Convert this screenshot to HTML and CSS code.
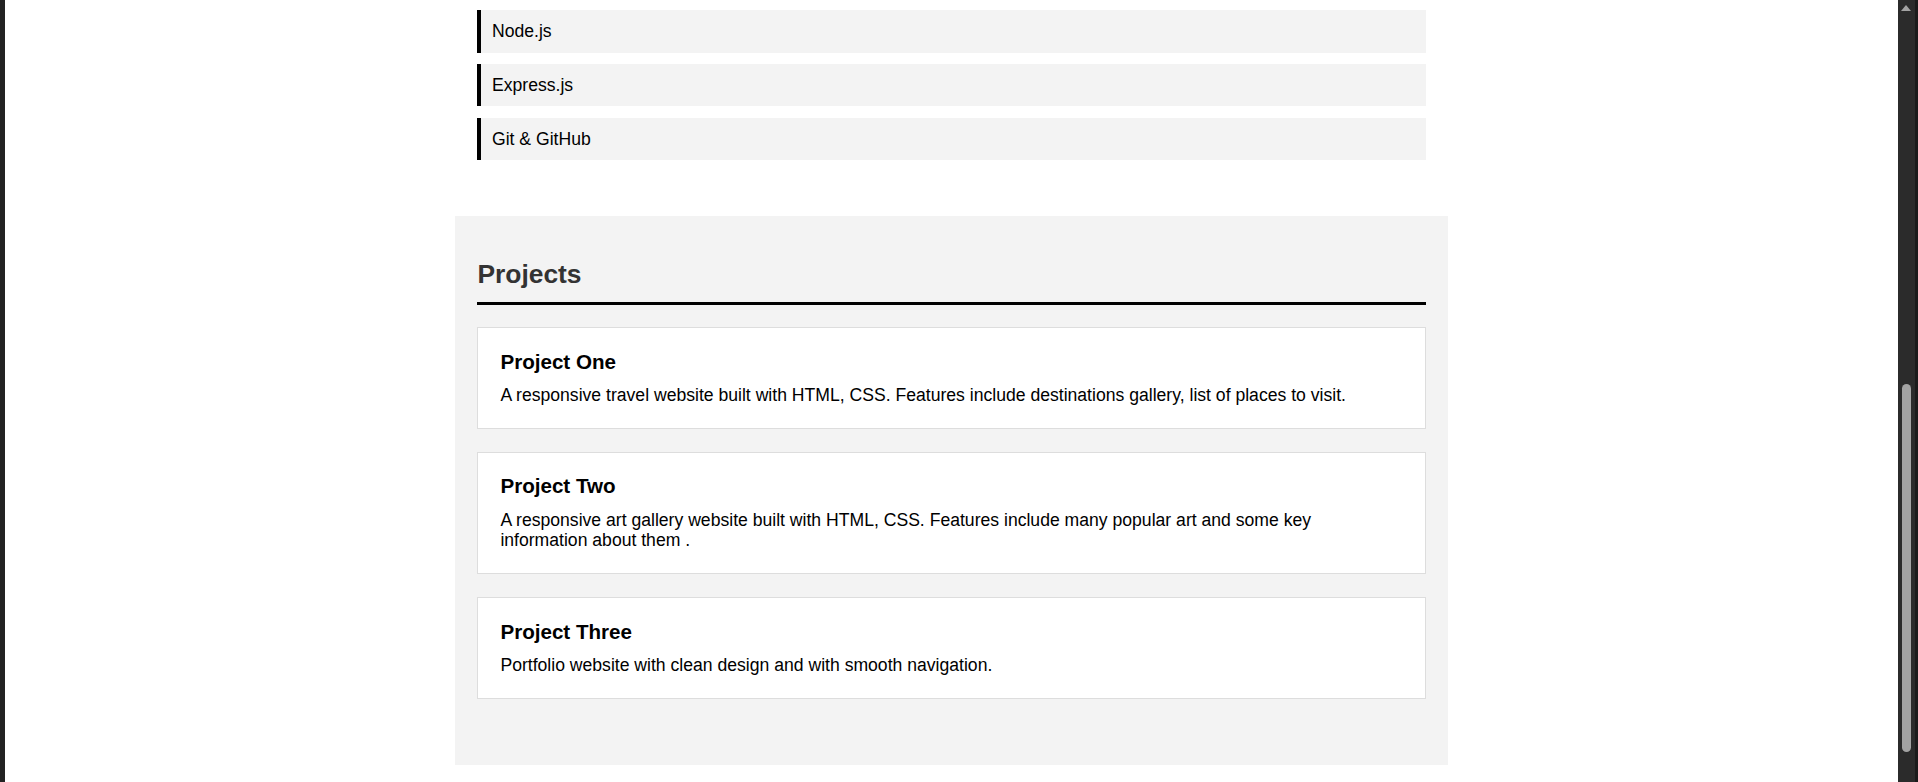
FILE: index.html
```html
<!DOCTYPE html>
<html lang="en">
<head>
<meta charset="utf-8">
<title>Portfolio</title>
<link rel="stylesheet" href="styles.css">
</head>
<body>
<div class="window">
  <div class="edge"></div>
  <div class="viewport">
    <main class="page">
      <section class="skills">
        <ul class="skill-list">
          <li class="skill">Node.js</li>
          <li class="skill">Express.js</li>
          <li class="skill">Git &amp; GitHub</li>
        </ul>
      </section>
      <section class="projects">
        <h2 class="section-title">Projects</h2>
        <div class="project-list">
          <article class="project">
            <h3 class="project-title">Project One</h3>
            <p class="project-desc">A responsive travel website built with HTML, CSS. Features include destinations gallery, list of places to visit.</p>
          </article>
          <article class="project">
            <h3 class="project-title">Project Two</h3>
            <p class="project-desc">A responsive art gallery website built with HTML, CSS. Features include many popular art and some key information about them .</p>
          </article>
          <article class="project">
            <h3 class="project-title">Project Three</h3>
            <p class="project-desc">Portfolio website with clean design and with smooth navigation.</p>
          </article>
        </div>
      </section>
    </main>
  </div>
  <div class="scrollbar">
    <div class="scroll-track">
      <div class="scroll-up"></div>
      <div class="scroll-thumb"></div>
    </div>
    <div class="scroll-edge"></div>
  </div>
</div>
</body>
</html>
```

FILE: styles.css
```css
* { box-sizing: border-box; }

html, body {
  margin: 0;
  padding: 0;
  height: 782px;
  overflow: hidden;
  background: #ffffff;
  font-family: "Liberation Sans", Arial, sans-serif;
  color: #000;
}

.window {
  display: flex;
  height: 782px;
  width: 1918px;
}

.edge {
  width: 5px;
  background: #222222;
  flex: none;
}

.viewport {
  flex: 1;
  background: #fff;
  overflow: hidden;
}

.page {
  width: 993px;
  margin: 0 auto;
}

.skills {
  padding: 10px 22.4px 22.4px;
}

.skill-list {
  list-style: none;
  margin: 0;
  padding: 0;
}

.skill {
  background: #f3f3f3;
  border-left: 4px solid #000;
  padding: 11.2px 11.2px 11.2px 10.6px;
  font-size: 17.6px;
  line-height: 20.24px;
  margin-bottom: 11.2px;
}

.projects {
  margin-top: 22.4px;
  background: #f3f3f3;
  padding: 43px 22.4px 66.7px;
}

.section-title {
  margin: 0 0 22px;
  font-size: 26.4px;
  line-height: 30.4px;
  color: #333;
  font-weight: bold;
  padding-bottom: 12.6px;
  border-bottom: 3px solid #000;
}

.project-list {
  display: flex;
  flex-direction: column;
  gap: 23.4px;
}

.project {
  background: #fff;
  border: 1px solid #dddddd;
  padding: 21.4px 22.4px 22.4px 22px;
}

.project-title {
  margin: 0 0 11.8px;
  font-size: 20.6px;
  line-height: 23.7px;
  font-weight: bold;
}

.project-desc {
  margin: 0;
  font-size: 17.6px;
  line-height: 20.24px;
}

.scrollbar {
  width: 20px;
  flex: none;
  display: flex;
}

.scroll-track {
  width: 17px;
  background: #2b2b2b;
  position: relative;
}

.scroll-edge {
  width: 3px;
  background: #1b1b1b;
}

.scroll-up {
  position: absolute;
  top: 5px;
  left: 3px;
  width: 0;
  height: 0;
  border-left: 5.5px solid transparent;
  border-right: 5.5px solid transparent;
  border-bottom: 6px solid #a3a3a3;
}

.scroll-thumb {
  position: absolute;
  top: 384px;
  left: 4px;
  width: 9px;
  height: 368px;
  border-radius: 5px;
  background: #a3a3a3;
}
```
